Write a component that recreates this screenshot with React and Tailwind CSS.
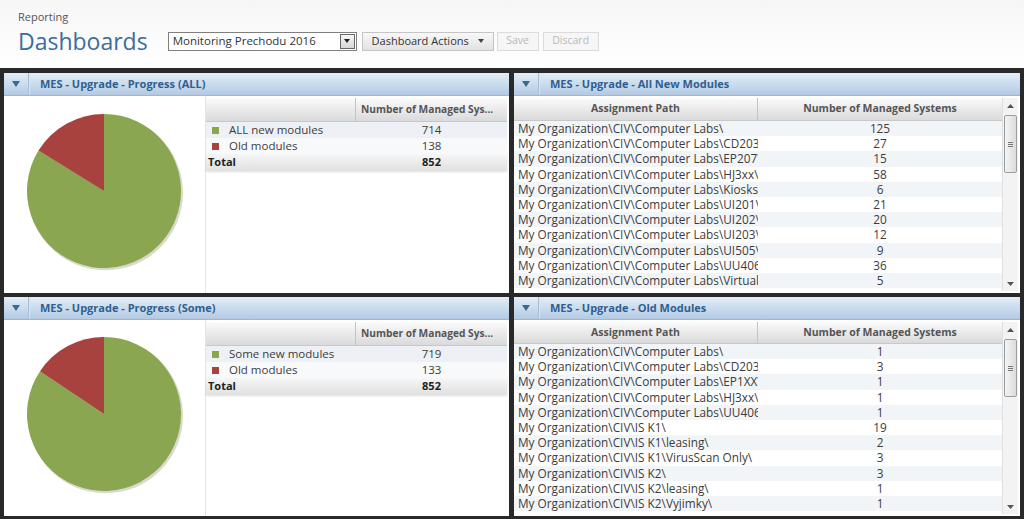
import React from "react";

const topRows = [
  ["My Organization\\CIV\\Computer Labs\\", 125],
  ["My Organization\\CIV\\Computer Labs\\CD203\\", 27],
  ["My Organization\\CIV\\Computer Labs\\EP207\\", 15],
  ["My Organization\\CIV\\Computer Labs\\HJ3xx\\", 58],
  ["My Organization\\CIV\\Computer Labs\\Kiosks\\", 6],
  ["My Organization\\CIV\\Computer Labs\\UI201\\", 21],
  ["My Organization\\CIV\\Computer Labs\\UI202\\", 20],
  ["My Organization\\CIV\\Computer Labs\\UI203\\", 12],
  ["My Organization\\CIV\\Computer Labs\\UI505\\", 9],
  ["My Organization\\CIV\\Computer Labs\\UU406\\", 36],
  ["My Organization\\CIV\\Computer Labs\\Virtual\\", 5],
];

const bottomRows = [
  ["My Organization\\CIV\\Computer Labs\\", 1],
  ["My Organization\\CIV\\Computer Labs\\CD203\\", 3],
  ["My Organization\\CIV\\Computer Labs\\EP1XX\\", 1],
  ["My Organization\\CIV\\Computer Labs\\HJ3xx\\", 1],
  ["My Organization\\CIV\\Computer Labs\\UU406\\", 1],
  ["My Organization\\CIV\\IS K1\\", 19],
  ["My Organization\\CIV\\IS K1\\leasing\\", 2],
  ["My Organization\\CIV\\IS K1\\VirusScan Only\\", 3],
  ["My Organization\\CIV\\IS K2\\", 3],
  ["My Organization\\CIV\\IS K2\\leasing\\", 1],
  ["My Organization\\CIV\\IS K2\\Vyjimky\\", 1],
];

function PanelHeader({ title }) {
  return (
    <div className="h-[23px] shrink-0 flex items-center bg-gradient-to-b from-[#e3edf7] to-[#b3cae3] border-b border-[#9fb6cf]">
      <div className="w-[25px] h-full flex items-center justify-center border-r border-[#a7bdd5] shadow-[1px_0_0_#d6e3f0]">
        <svg width="8" height="6" viewBox="0 0 8 6">
          <path d="M0 0 L8 0 L4 6 Z" fill="#3a6897" />
        </svg>
      </div>
      <div className="pl-[11px] text-[11px] font-bold text-[#2f5f90]">{title}</div>
    </div>
  );
}

function Pie({ frac }) {
  const a = frac * 2 * Math.PI;
  const cx = 80, cy = 80, r = 77;
  const ex = cx - r * Math.sin(a);
  const ey = cy - r * Math.cos(a);
  return (
    <svg width="164" height="164" viewBox="0 0 164 164">
      <circle cx="81.5" cy="81.8" r="77.5" fill="#c9cbb8" opacity="0.7" />
      <path d={`M${cx} ${cy} L${ex} ${ey} A${r} ${r} 0 1 0 ${cx} ${cy - r} Z`} fill="#8ba650" />
      <path d={`M${cx} ${cy} L${cx} ${cy - r} A${r} ${r} 0 0 0 ${ex} ${ey} Z`} fill="#a8423f" />
    </svg>
  );
}

function LeftPanel({ title, first, firstVal, oldVal, total }) {
  return (
    <div className="flex flex-col bg-white overflow-hidden">
      <PanelHeader title={title} />
      <div className="flex flex-1 min-h-0">
        <div className="w-[202px] shrink-0 border-r border-[#e4e4e4] flex items-center justify-center pb-[4px] pl-[2px]">
          <Pie frac={oldVal / total} />
        </div>
        <div className="flex-1 pt-[2px] pr-[2px] text-[11.5px] text-[#3c3c3c]">
          <div className="h-[24px] flex bg-gradient-to-b from-[#fbfbfb] to-[#dadada] border-b border-[#c8c8c8]">
            <div className="w-[150px] border-r border-[#c4c4c4]" />
            <div className="flex-1 pl-[5px] flex items-center text-[10.2px] font-bold text-[#555] whitespace-nowrap overflow-hidden">
              Number of Managed Sys...
            </div>
          </div>
          <div className="h-[16px] flex items-center bg-[#edf1f5]">
            <div className="w-[150px] flex items-center pl-[6px]">
              <span className="w-[7px] h-[7px] bg-[#8ba650] mr-[10px]" />
              {first}
            </div>
            <div className="flex-1 text-center">{firstVal}</div>
          </div>
          <div className="h-[16px] flex items-center bg-[#f8f9fb]">
            <div className="w-[150px] flex items-center pl-[6px]">
              <span className="w-[7px] h-[7px] bg-[#a8423f] mr-[10px]" />
              Old modules
            </div>
            <div className="flex-1 text-center">{oldVal}</div>
          </div>
          <div className="h-[16px] flex items-center bg-gradient-to-b from-[#f6f6f6] to-[#e2e2e2] shadow-[0_2px_2px_rgba(0,0,0,0.12)] font-bold text-[#222] text-[11px]">
            <div className="w-[150px] pl-[2px]">Total</div>
            <div className="flex-1 text-center">{total}</div>
          </div>
        </div>
      </div>
    </div>
  );
}

function Scrollbar() {
  return (
    <div className="w-[16px] shrink-0 flex flex-col bg-[#f3f3f3] border-l border-[#e0e0e0] items-center">
      <div className="h-[15px] flex items-center justify-center">
        <svg width="7" height="4" viewBox="0 0 7 4"><path d="M0 4 L3.5 0 L7 4 Z" fill="#555" /></svg>
      </div>
      <div className="w-[13px] h-[58px] mt-[2px] rounded-[2px] border border-[#9c9c9c] bg-gradient-to-r from-[#f4f4f4] to-[#dcdcdc] flex flex-col items-center justify-center gap-[1px]">
        <div className="w-[5px] h-[1px] bg-[#777]" />
        <div className="w-[5px] h-[1px] bg-[#777]" />
        <div className="w-[5px] h-[1px] bg-[#777]" />
      </div>
      <div className="flex-1" />
      <div className="h-[14px] flex items-center justify-center">
        <svg width="7" height="4" viewBox="0 0 7 4"><path d="M0 0 L7 0 L3.5 4 Z" fill="#555" /></svg>
      </div>
    </div>
  );
}

function RightPanel({ title, rows, top }) {
  return (
    <div className="flex flex-col bg-white overflow-hidden">
      <PanelHeader title={title} />
      <div className="flex flex-1 min-h-0 pt-[2px] pr-[2px] pb-[2px]">
        <div className="flex-1 flex flex-col min-w-0 overflow-hidden">
          <div className={`${top ? "h-[23px]" : "h-[22px]"} shrink-0 flex bg-gradient-to-b from-[#fbfbfb] to-[#dadada] border-b border-[#c8c8c8] text-[10.5px] font-bold text-[#555]`}>
            <div className="w-[244px] border-r border-[#c4c4c4] flex items-center justify-center">Assignment Path</div>
            <div className="flex-1 flex items-center justify-center">Number of Managed Systems</div>
          </div>
          <div className="flex-1 overflow-hidden text-[11.8px] text-[#3c3c3c]">
            {rows.map(([path, n], i) => (
              <div key={i} className={`h-[15.2px] flex items-center ${i % 2 === 0 ? "bg-[#f2f5f8]" : "bg-white"}`}>
                <div className="w-[240px] ml-[4px] whitespace-nowrap overflow-hidden leading-[15px]">{path}</div>
                <div className="flex-1 text-center leading-[15px]">{n}</div>
              </div>
            ))}
          </div>
        </div>
        <Scrollbar />
      </div>
    </div>
  );
}

export default function App() {
  return (
    <div className="w-[1024px] h-[519px] overflow-hidden flex flex-col font-['Open_Sans',sans-serif] bg-white">
      <div className="h-[68px] shrink-0 bg-gradient-to-b from-[#f6f6f6] to-white pl-[18px] pt-[9px]">
        <div className="text-[11px] leading-[16px] text-[#555]">Reporting</div>
        <div className="flex items-center h-[30px] mt-[1px]">
          <div className="text-[23px] leading-[30px] text-[#3b6d9e]">Dashboards</div>
          <div className="ml-[20px] w-[189px] h-[19px] border border-[#7f7f7f] bg-white flex items-center text-[11.5px] text-[#333]">
            <div className="flex-1 pl-[4px] whitespace-nowrap">Monitoring Prechodu 2016</div>
            <div className="w-[15px] h-[15px] mr-[1px] border border-[#666] bg-gradient-to-b from-[#f7f7f7] to-[#d8d8d8] flex items-center justify-center">
              <svg width="6" height="4" viewBox="0 0 6 4"><path d="M0 0 L6 0 L3 4 Z" fill="#222" /></svg>
            </div>
          </div>
          <div className="ml-[5px] w-[132px] h-[19px] border border-[#c5c5c5] bg-gradient-to-b from-[#f8f8f8] to-[#e2e2e2] flex items-center justify-center text-[11px] text-[#333]">
            Dashboard Actions
            <svg className="ml-[9px]" width="6" height="4" viewBox="0 0 6 4"><path d="M0 0 L6 0 L3 4 Z" fill="#444" /></svg>
          </div>
          <div className="ml-[3px] w-[42px] h-[19px] border border-[#dcdcdc] bg-[#f6f6f6] flex items-center justify-center text-[10.5px] text-[#b8b8b8]">Save</div>
          <div className="ml-[4px] w-[56px] h-[19px] border border-[#dcdcdc] bg-[#f6f6f6] flex items-center justify-center text-[10.5px] text-[#b8b8b8]">Discard</div>
        </div>
      </div>
      <div className="flex-1 bg-[#292929] pt-[5px] pl-[4px] pr-[4px] pb-[3px] grid grid-cols-[505px_506px] grid-rows-[220px_219px] gap-x-[5px] gap-y-[4px]">
        <LeftPanel title="MES - Upgrade - Progress (ALL)" first="ALL new modules" firstVal={714} oldVal={138} total={852} />
        <RightPanel title="MES - Upgrade - All New Modules" rows={topRows} top />
        <LeftPanel title="MES - Upgrade - Progress (Some)" first="Some new modules" firstVal={719} oldVal={133} total={852} />
        <RightPanel title="MES - Upgrade - Old Modules" rows={bottomRows} />
      </div>
    </div>
  );
}
